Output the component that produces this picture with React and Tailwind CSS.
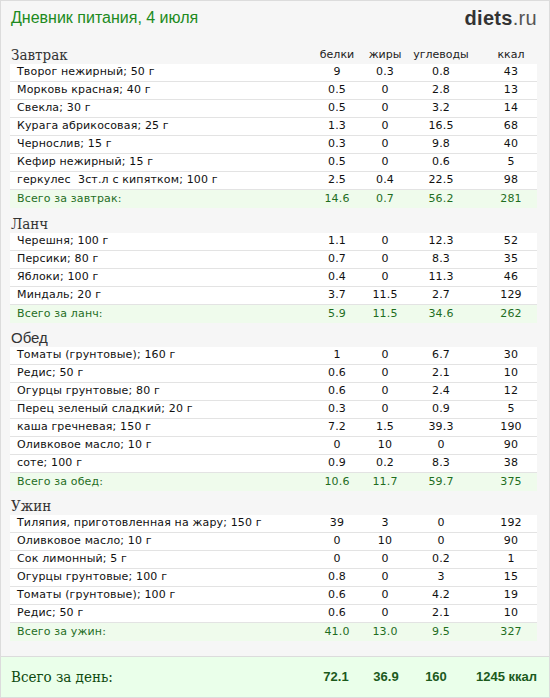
import React from "react";

const sections = [
  {
    title: "Завтрак",
    font: "serif",
    header: true,
    rows: [
      ["Творог нежирный; 50 г", "9", "0.3", "0.8", "43"],
      ["Морковь красная; 40 г", "0.5", "0", "2.8", "13"],
      ["Свекла; 30 г", "0.5", "0", "3.2", "14"],
      ["Курага абрикосовая; 25 г", "1.3", "0", "16.5", "68"],
      ["Чернослив; 15 г", "0.3", "0", "9.8", "40"],
      ["Кефир нежирный; 15 г", "0.5", "0", "0.6", "5"],
      ["геркулес  3ст.л с кипятком; 100 г", "2.5", "0.4", "22.5", "98"],
    ],
    total: ["Всего за завтрак:", "14.6", "0.7", "56.2", "281"],
  },
  {
    title: "Ланч",
    font: "serif",
    rows: [
      ["Черешня; 100 г", "1.1", "0", "12.3", "52"],
      ["Персики; 80 г", "0.7", "0", "8.3", "35"],
      ["Яблоки; 100 г", "0.4", "0", "11.3", "46"],
      ["Миндаль; 20 г", "3.7", "11.5", "2.7", "129"],
    ],
    total: ["Всего за ланч:", "5.9", "11.5", "34.6", "262"],
  },
  {
    title: "Обед",
    font: "sans",
    rows: [
      ["Томаты (грунтовые); 160 г", "1", "0", "6.7", "30"],
      ["Редис; 50 г", "0.6", "0", "2.1", "10"],
      ["Огурцы грунтовые; 80 г", "0.6", "0", "2.4", "12"],
      ["Перец зеленый сладкий; 20 г", "0.3", "0", "0.9", "5"],
      ["каша гречневая; 150 г", "7.2", "1.5", "39.3", "190"],
      ["Оливковое масло; 10 г", "0", "10", "0", "90"],
      ["соте; 100 г", "0.9", "0.2", "8.3", "38"],
    ],
    total: ["Всего за обед:", "10.6", "11.7", "59.7", "375"],
  },
  {
    title: "Ужин",
    font: "serif",
    rows: [
      ["Тиляпия, приготовленная на жару; 150 г", "39", "3", "0", "192"],
      ["Оливковое масло; 10 г", "0", "10", "0", "90"],
      ["Сок лимонный; 5 г", "0", "0", "0.2", "1"],
      ["Огурцы грунтовые; 100 г", "0.8", "0", "3", "15"],
      ["Томаты (грунтовые); 100 г", "0.6", "0", "4.2", "19"],
      ["Редис; 50 г", "0.6", "0", "2.1", "10"],
    ],
    total: ["Всего за ужин:", "41.0", "13.0", "9.5", "327"],
  },
];

const grid = "grid grid-cols-[303px_48px_48px_64px_12px_52px] items-center";
const rowFont = { fontFamily: '"DejaVu Sans", Verdana, sans-serif' };
const serifFont = { fontFamily: '"DejaVu Serif", serif', fontStretch: "condensed" };
const sansFont = { fontFamily: '"Liberation Sans", Arial, sans-serif' };

function Row({ r, total }) {
  return (
    <div
      className={`${grid} h-[18px] text-[11px] tracking-[0.15px] ${
        total ? "bg-[#effbec] text-[#1f6e1f]" : "bg-white text-[#111] border-b border-[#e3e3e3]"
      }`}
      style={rowFont}
    >
      <div className="pl-[7px] whitespace-pre truncate">{r[0]}</div>
      <div className="text-center">{r[1]}</div>
      <div className="text-center">{r[2]}</div>
      <div className="text-center">{r[3]}</div>
      <div />
      <div className="text-center">{r[4]}</div>
    </div>
  );
}

function Heading({ s }) {
  return (
    <div
      className="pl-[1px] text-[15px] text-[#333] leading-[18px]"
      style={s.font === "serif" ? serifFont : sansFont}
    >
      {s.title}
    </div>
  );
}

export default function App() {
  return (
    <div className="w-[550px] h-[698px] bg-[#f6f6f6] border border-[#dcdcdc] flex flex-col overflow-hidden">
      <div className="h-[38px] flex justify-between items-start pl-[10px] pr-[12px] pt-[6px]">
        <div className="text-[16px] text-[#208a20] leading-[22px]" style={sansFont}>
          Дневник питания, 4 июля
        </div>
        <div className="text-[20px] leading-[20px] mt-[1px] tracking-[0.3px]" style={sansFont}>
          <span className="font-bold text-[#333]">diets</span>
          <span className="text-[#555]">.ru</span>
        </div>
      </div>
      <div className="flex flex-col pl-[9px] pr-[12px]">
        {sections.map((s, i) => (
          <div key={i} className="flex flex-col">
            {s.header ? (
              <div className={`${grid} h-[25px] items-end`}>
                <Heading s={s} />
                {["белки", "жиры", "углеводы", "", "ккал"].map((h, j) => (
                  <div
                    key={j}
                    className="text-center text-[11px] text-[#222] leading-[18px]"
                    style={rowFont}
                  >
                    {h}
                  </div>
                ))}
              </div>
            ) : (
              <div className={`${i === 1 ? "h-[25px]" : "h-[24px]"} flex items-end`}>
                <Heading s={s} />
              </div>
            )}
            {s.rows.map((r, j) => (
              <Row key={j} r={r} />
            ))}
            <Row r={s.total} total />
          </div>
        ))}
      </div>
      <div className="flex-1" />
      <div className="h-[41px] bg-[#eaffea] border-t border-[#dcdcdc] grid grid-cols-[301px_48px_52px_48px_1fr] items-center pl-[10px] pr-[12px]">
        <div className="text-[15px] text-[#0f4a0f]" style={serifFont}>
          Всего за день:
        </div>
        {["72.1", "36.9", "160"].map((v, i) => (
          <div key={i} className="text-center font-bold text-[13px] text-[#1c5a1c]" style={sansFont}>
            {v}
          </div>
        ))}
        <div className="text-right font-bold text-[13px] text-[#1c5a1c]" style={sansFont}>
          1245 ккал
        </div>
      </div>
    </div>
  );
}
